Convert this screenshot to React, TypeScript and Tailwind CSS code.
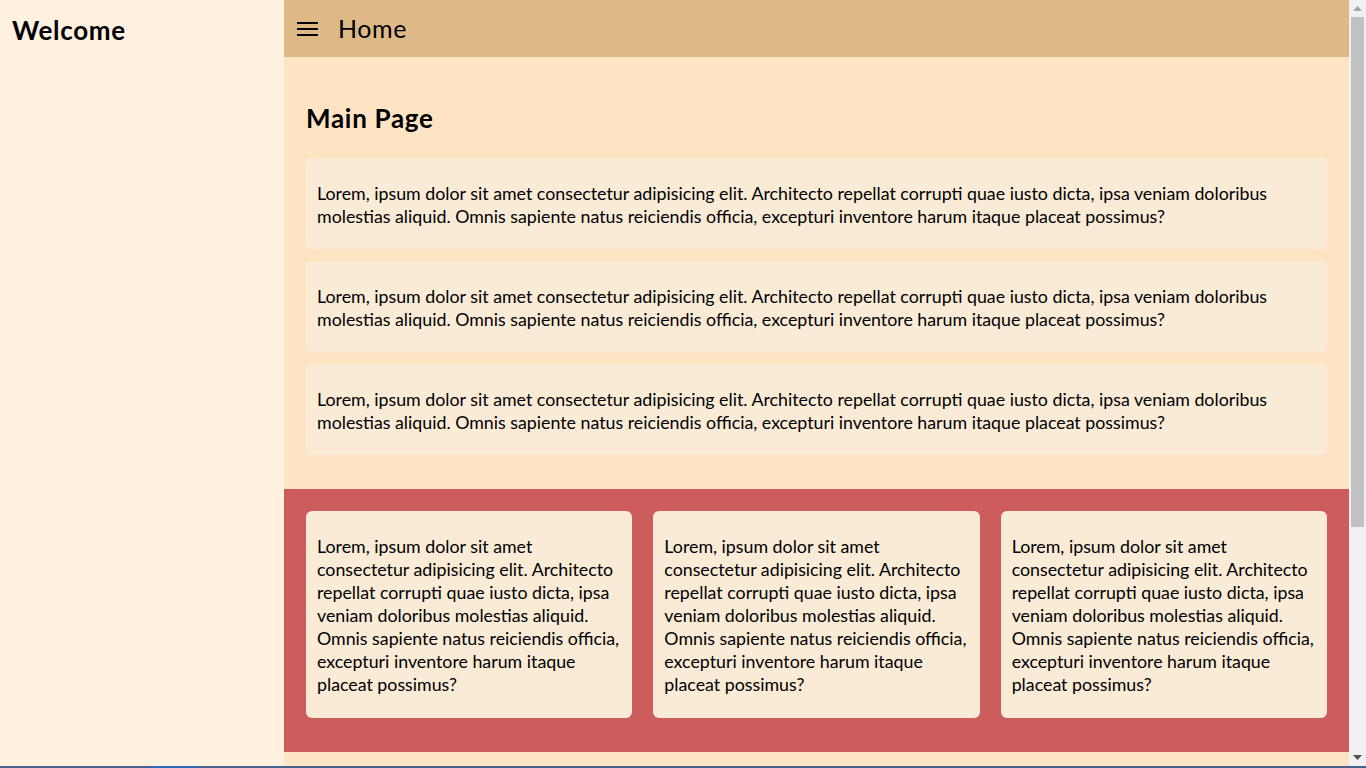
const lorem =
  "Lorem, ipsum dolor sit amet consectetur adipisicing elit. Architecto repellat corrupti quae iusto dicta, ipsa veniam doloribus molestias aliquid. Omnis sapiente natus reiciendis officia, excepturi inventore harum itaque placeat possimus?";

function MenuIcon() {
  return (
    <svg width="22" height="16" viewBox="0 0 22 16" className="text-black">
      <rect x="0" y="1" width="21" height="2" fill="currentColor" />
      <rect x="0" y="7" width="21" height="2" fill="currentColor" />
      <rect x="0" y="13" width="21" height="2" fill="currentColor" />
    </svg>
  );
}

function ScrollArrow({ up, color }: { up?: boolean; color: string }) {
  return (
    <div className="flex h-[17px] items-center justify-center">
      <svg width="9" height="5" viewBox="0 0 9 5">
        <polygon points={up ? "4.5,0 9,5 0,5" : "0,0 9,0 4.5,5"} fill={color} />
      </svg>
    </div>
  );
}

// fake classic scrollbar, the headless browser hides the real one
function Scrollbar() {
  return (
    <div className="flex w-[17px] shrink-0 flex-col bg-[#f1f1f1]">
      <ScrollArrow up color="#a3a3a3" />
      <div className="flex flex-1 flex-col px-[2px]">
        <div className="h-[510px] bg-[#c1c1c1]" />
      </div>
      <ScrollArrow color="#505050" />
    </div>
  );
}

export default function App() {
  return (
    <div
      className="flex h-screen flex-col overflow-hidden text-black"
      style={{ fontFamily: "Lato, 'Noto Sans', sans-serif" }}
    >
      <div className="flex min-h-0 flex-1">
        <div className="flex min-w-0 flex-1 overflow-hidden">
          <aside className="w-[284px] shrink-0 bg-[#fef1e0]">
            <h1 className="px-3 pt-[14px] text-[26px] font-bold leading-[32px] tracking-[0.7px]">
              Welcome
            </h1>
          </aside>

          <div className="flex flex-1 flex-col bg-[#ffe4c4]">
            <header className="flex h-[57px] shrink-0 items-center gap-[19px] bg-[#deb887] px-[13px]">
              <MenuIcon />
              <span className="text-[25px] leading-none tracking-[0.6px]">Home</span>
            </header>

            <section className="shrink-0 px-[22px] pb-[34px] pt-[45px]">
              <h2 className="mb-[24px] text-[26px] font-bold leading-[32px] tracking-[0.7px]">
                Main Page
              </h2>
              <div className="flex flex-col gap-3">
                {[0, 1, 2].map((i) => (
                  <div key={i} className="rounded-[5px] bg-[#faebd7] px-[11px] pb-[21px] pt-[24px]">
                    <p className="text-[17.8px] leading-[23px]">{lorem}</p>
                  </div>
                ))}
              </div>
            </section>

            <section className="grid shrink-0 grid-cols-3 gap-[21px] bg-[#cd5c5c] px-[22px] pb-[34px] pt-[22px]">
              {[0, 1, 2].map((i) => (
                <div key={i} className="rounded-[6px] bg-[#faebd7] px-[11px] pb-[22px] pt-[24px]">
                  <p className="text-[17.8px] leading-[23px]">{lorem}</p>
                </div>
              ))}
            </section>

            <div className="min-h-[340px] flex-1" />
          </div>
        </div>
        <Scrollbar />
      </div>
      <div className="flex h-[2px] shrink-0 bg-[#47638d]">
        <div className="ml-[150px] w-[47px] bg-[#2f6ab3]" />
      </div>
    </div>
  );
}
